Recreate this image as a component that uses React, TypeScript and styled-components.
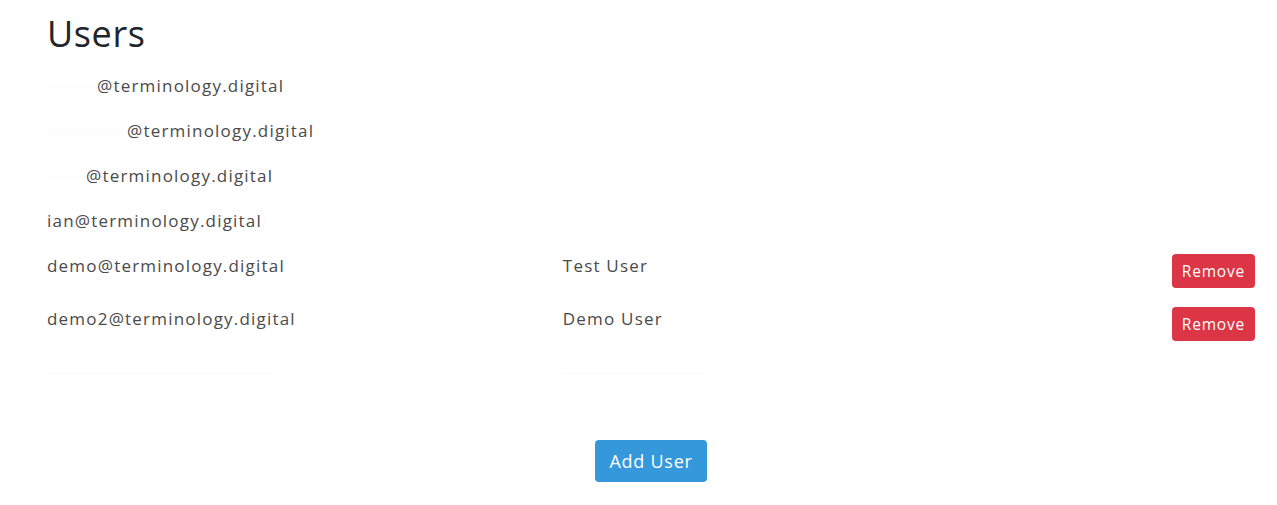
import React from "react";
import styled, { createGlobalStyle } from "styled-components";

interface UserEntry {
  hidden?: number;
  email: string;
  name?: string;
  hiddenName?: boolean;
  removable?: boolean;
}

const users: UserEntry[] = [
  { hidden: 50, email: "@terminology.digital" },
  { hidden: 80, email: "@terminology.digital" },
  { hidden: 39, email: "@terminology.digital" },
  { email: "ian@terminology.digital" },
  { email: "demo@terminology.digital", name: "Test User", removable: true },
  { email: "demo2@terminology.digital", name: "Demo User", removable: true },
  { hidden: 230, email: "", hiddenName: true },
];

const GlobalStyle = createGlobalStyle`
  body {
    margin: 0;
    background: #fff;
    font-family: "Open Sans", "Liberation Sans", sans-serif;
  }
`;

const Page = styled.div`
  padding: 12px 7px 0 32px;
`;

const Title = styled.h1`
  margin: 0 0 19px 15px;
  font-size: 36px;
  font-weight: 400;
  line-height: 43px;
  letter-spacing: 0.6px;
  color: #212529;
`;

const Row = styled.div`
  display: grid;
  grid-template-columns: 5fr 5fr 2fr;
  align-items: start;
`;

const Cell = styled.div<{ $right?: boolean }>`
  padding: 0 15px;
  display: flex;
  justify-content: ${(p) => (p.$right ? "flex-end" : "flex-start")};
`;

const Text = styled.span`
  font-size: 17px;
  line-height: 24px;
  letter-spacing: 1.2px;
  color: #4a4a4a;
  margin-bottom: 21px;
  white-space: nowrap;
`;

const Redacted = styled.span<{ $w: number }>`
  display: inline-block;
  width: ${(p) => p.$w}px;
  height: 1px;
  border-bottom: 1px dotted #f4f4f4;
  vertical-align: middle;
`;

const RemoveButton = styled.button`
  height: 34px;
  padding: 0 10px;
  margin-bottom: 19px;
  border: none;
  border-radius: 4px;
  background: #dc3545;
  color: #fff;
  font-family: inherit;
  font-size: 15.5px;
  letter-spacing: 0.8px;
  cursor: pointer;
`;

const Footer = styled.div`
  display: flex;
  justify-content: center;
  margin-top: 35px;
`;

const AddButton = styled.button`
  height: 42px;
  padding: 0 14px;
  border: none;
  border-radius: 4px;
  background: #3498db;
  color: #fff;
  font-family: inherit;
  font-size: 18px;
  letter-spacing: 0.75px;
  cursor: pointer;
`;

export default function App() {
  return (
    <Page>
      <GlobalStyle />
      <Title>Users</Title>
      {users.map((u, i) => (
        <Row key={i}>
          <Cell>
            <Text>
              {u.hidden ? <Redacted $w={u.hidden} /> : null}
              {u.email}
            </Text>
          </Cell>
          <Cell>
            {u.name && <Text>{u.name}</Text>}
            {u.hiddenName && (
              <Text>
                <Redacted $w={140} />
              </Text>
            )}
          </Cell>
          <Cell $right>{u.removable && <RemoveButton>Remove</RemoveButton>}</Cell>
        </Row>
      ))}
      <Footer>
        <AddButton>Add User</AddButton>
      </Footer>
    </Page>
  );
}
